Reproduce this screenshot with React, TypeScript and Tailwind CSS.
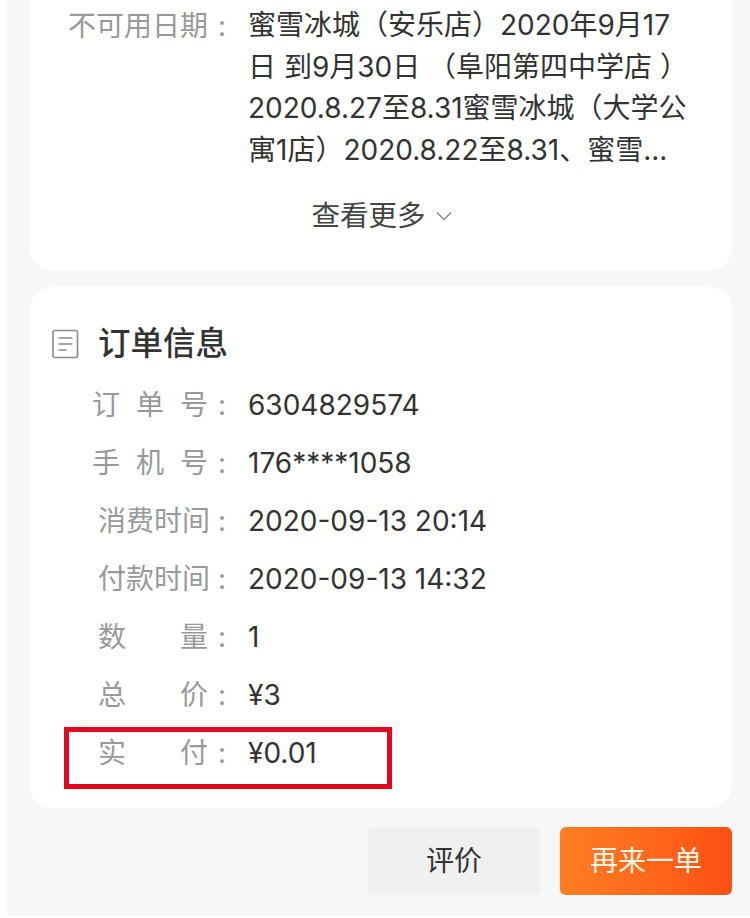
const rows: { label: string; chars: string[]; value: string; narrow?: boolean }[] = [
  { label: "订单号", chars: ["订", "单", "号"], value: "6304829574", narrow: true },
  { label: "手机号", chars: ["手", "机", "号"], value: "176****1058", narrow: true },
  { label: "消费时间", chars: ["消", "费", "时", "间"], value: "2020-09-13 20:14" },
  { label: "付款时间", chars: ["付", "款", "时", "间"], value: "2020-09-13 14:32" },
  { label: "数量", chars: ["数", "量"], value: "1" },
  { label: "总价", chars: ["总", "价"], value: "¥3" },
  { label: "实付", chars: ["实", "付"], value: "¥0.01" },
];

const blockedLines = [
  "蜜雪冰城（安乐店）2020年9月17",
  "日 到9月30日 （阜阳第四中学店 ）",
  "2020.8.27至8.31蜜雪冰城（大学公",
  "寓1店）2020.8.22至8.31、蜜雪...",
];

function OrderIcon() {
  return (
    <svg width="27" height="30" viewBox="0 0 27 30" fill="none" className="shrink-0">
      <rect x="1" y="1.5" width="24.5" height="27" rx="1.5" stroke="#8a8a8a" strokeWidth="1.6" />
      <path d="M6.5 9h14M6.5 15h14M6.5 21h8" stroke="#8a8a8a" strokeWidth="1.5" />
    </svg>
  );
}

export default function App() {
  return (
    <div
      className="h-[918px] w-[750px] overflow-hidden bg-white pb-[2px] pl-[7px] text-[#333]"
      style={{ fontFamily: 'Inter, "Noto Sans CJK SC", sans-serif' }}
    >
      <div className="flex h-[916px] flex-col gap-[17px] bg-[#f7f7f7] pl-[23px] pr-[18px]">
        <section className="h-[270px] rounded-b-[22px] bg-white pl-[38px] pr-[30px] pt-[5px]">
          <div className="flex">
            <div className="flex h-[41px] w-[180px] shrink-0 items-center text-[28px] text-[#999]">
              <span className="w-[140px]">不可用日期</span>
              <span className="pl-[10px]">:</span>
            </div>
            <div className="text-[28px] leading-[41.5px] whitespace-nowrap">
              {blockedLines.map((line) => (
                <div key={line}>{line}</div>
              ))}
            </div>
          </div>
          <div className="mt-[25px] flex items-center justify-center gap-[9px] pr-[6px] text-[28.5px] leading-[40px] text-[#444]">
            <span>查看更多</span>
            <svg width="18" height="12" viewBox="0 0 18 12" fill="none">
              <path d="M2 2.5l7 7 7-7" stroke="#888" strokeWidth="1.4" />
            </svg>
          </div>
        </section>

        <section className="relative h-[521px] rounded-[22px] bg-white pl-[22px] pt-[36px]">
          <div className="flex h-[42px] items-center gap-[19px]">
            <OrderIcon />
            <h2 className="text-[32.5px] font-medium text-[#333]">订单信息</h2>
          </div>
          <div className="mt-[20px] flex flex-col gap-[18px]">
            {rows.map((row) => (
              <div key={row.label} className="relative flex h-[40px] items-center text-[28px]">
                <div
                  className={`flex justify-between text-[#999] ${
                    row.narrow ? "ml-[40px] w-[116px]" : "ml-[46px] w-[110px]"
                  }`}
                >
                  {row.chars.map((c, i) => (
                    <span key={i}>{c}</span>
                  ))}
                </div>
                <span className="ml-[10px] w-[31px] text-[#999]">:</span>
                <span className="ml-[-1px] whitespace-nowrap">{row.value}</span>
                {row.label === "实付" && (
                  <div className="absolute left-[12px] top-[-6px] h-[62px] w-[328px] border-[5px] border-[#e2091f]" />
                )}
              </div>
            ))}
          </div>
        </section>

        <div className="mt-[2px] flex justify-end gap-[20px] text-[28px]">
          <button className="flex h-[68px] w-[172px] items-center justify-center rounded-[6px] bg-[#f0f0f0] text-[#333]">
            评价
          </button>
          <button className="flex h-[68px] w-[172px] items-center justify-center rounded-[6px] bg-gradient-to-r from-[#ff7e22] to-[#ff4f12] text-[#fff3e6]">
            再来一单
          </button>
        </div>
      </div>
    </div>
  );
}
